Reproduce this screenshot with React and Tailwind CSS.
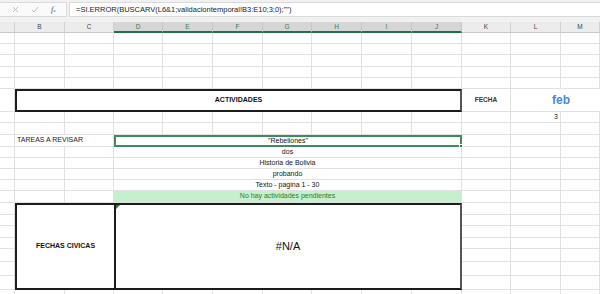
import React from 'react';

const COLS = [
  'w-[15px]', // A
  'w-[50px]', // B
  'w-[49px]', // C
  'w-[49px]', // D
  'w-[50px]', // E
  'w-[50px]', // F
  'w-[49px]', // G
  'w-[50px]', // H
  'w-[50px]', // I
  'w-[50px]', // J
  'w-[49px]', // K
  'w-[50px]', // L
  'flex-1', // M
];
const LETTERS = ['', 'B', 'C', 'D', 'E', 'F', 'G', 'H', 'I', 'J', 'K', 'L', 'M'];
const FONT = { fontFamily: '"Liberation Sans", Arial, sans-serif' };

const Blank = ({ i, className = '', children }) => (
  <div className={`${COLS[i]} shrink-0 h-full border-r border-b border-[#e1e1e1] ${className}`}>
    {children}
  </div>
);

const PlainRow = ({ h }) => (
  <div className={`flex ${h}`}>
    {COLS.map((_, i) => (
      <Blank key={i} i={i} />
    ))}
  </div>
);

// column of small sub-rows next to the tall merged boxes
const SubRows = ({ i }) => (
  <div className={`${COLS[i]} shrink-0 flex flex-col`}>
    {['h-[12px]', 'h-[11px]', 'h-[12px]', 'h-[11px]', 'h-[13px]', 'h-[14px]', 'h-[14px]'].map((h, k) => (
      <div key={k} className={`${h} border-r border-b border-[#e1e1e1]`} />
    ))}
  </div>
);

const MergedDJ = ({ children, className = '' }) => (
  <div
    className={`w-[348px] shrink-0 h-full border-r border-b border-[#e1e1e1] flex items-center justify-center text-[7px] ${className}`}
  >
    {children}
  </div>
);

const TextRow = ({ h, children, green }) => (
  <div className={`flex ${h}`}>
    <Blank i={0} />
    <Blank i={1} />
    <Blank i={2} />
    <MergedDJ className={green ? 'bg-[#c6efce] text-[#2a8020]' : 'text-[#111]'}>{children}</MergedDJ>
    <Blank i={10} />
    <Blank i={11} />
    <Blank i={12} />
  </div>
);

const FormulaBar = () => (
  <div className="h-[22px] bg-[#f1f1f1] pt-[2px] flex gap-[2px]">
    <div className="w-[67px] h-[15px] bg-[#fafafa] border-y border-r border-[#dadada] flex items-center pl-[12px] gap-[12px]">
      <svg width="7" height="7" viewBox="0 0 7 7" className="shrink-0">
        <path d="M1 1 L6 6 M6 1 L1 6" stroke="#b4b4b4" strokeWidth="0.9" />
      </svg>
      <svg width="8" height="7" viewBox="0 0 8 7" className="shrink-0">
        <path d="M1 4 L3 6 L7 1" stroke="#b4b4b4" strokeWidth="0.9" fill="none" />
      </svg>
      <span className="text-[8px] italic text-[#555] leading-none" style={{ fontFamily: '"Liberation Serif", serif' }}>
        f<span className="text-[5px]">x</span>
      </span>
    </div>
    <div className="flex-1 h-[15px] bg-white border-y border-l border-[#dadada] flex items-center pl-[6px] text-[7.5px] text-[#222]">
      =SI.ERROR(BUSCARV(L6&amp;1;validaciontemporal!B3:E10;3;0);"")
    </div>
  </div>
);

const HeaderRow = () => (
  <div className="flex h-[11px]">
    {COLS.map((c, i) => {
      const sel = i >= 3 && i <= 9;
      return (
        <div
          key={i}
          className={`${c} shrink-0 h-full flex items-center justify-center text-[6.5px] border-r ${
            sel
              ? 'bg-[#d6d6d6] text-[#3c7a52] border-[#c4c4c4] border-b-2 border-b-[#217346]'
              : 'bg-[#ececec] text-[#444] border-[#d0d0d0] border-b border-b-[#c8c8c8]'
          }`}
        >
          {LETTERS[i]}
        </div>
      );
    })}
  </div>
);

export default function App() {
  return (
    <div className="w-[600px] h-[294px] overflow-hidden bg-white" style={FONT}>
      <FormulaBar />
      <HeaderRow />

      <PlainRow h="h-[11px]" />
      <PlainRow h="h-[11px]" />
      <PlainRow h="h-[12px]" />
      <PlainRow h="h-[11px]" />
      <PlainRow h="h-[11px]" />

      {/* ACTIVIDADES / FECHA / feb */}
      <div className="flex h-[23px]">
        <Blank i={0} />
        <div className="w-[447px] shrink-0 h-full border-2 border-[#1c1c1c] border-r-[#555] flex items-center justify-center text-[7px] font-bold text-[#111]">
          ACTIVIDADES
        </div>
        <Blank i={10} className="flex items-center justify-center text-[6.5px] font-bold text-[#333]">
          FECHA
        </Blank>
        <div className="flex-1 h-full border-b border-[#e1e1e1] flex items-center">
          <div className="w-[100px] text-center text-[12px] font-bold text-[#4a88da] leading-none">feb</div>
        </div>
      </div>

      <div className="flex h-[11px]">
        {COLS.map((_, i) => (
          <Blank key={i} i={i} className={i === 11 ? 'flex items-center justify-end pr-[2px] text-[7px] text-[#222]' : ''}>
            {i === 11 ? '3' : null}
          </Blank>
        ))}
      </div>

      <PlainRow h="h-[12px]" />

      {/* TAREAS A REVISAR */}
      <div className="flex h-[12px]">
        <Blank i={0} />
        <div className="w-[99px] shrink-0 h-full border-r border-b border-[#e1e1e1] flex items-center pl-[2px] text-[7px] text-[#222] whitespace-nowrap">
          TAREAS A REVISAR
        </div>
        <div className="relative w-[348px] shrink-0 h-full border-2 border-[#3f8a5b] flex items-center justify-center text-[7px] text-[#111]">
          "Rebeliones"
          <div className="absolute -right-[3px] -bottom-[3px] w-[4px] h-[4px] bg-[#217346] border border-white" />
        </div>
        <Blank i={10} />
        <Blank i={11} />
        <Blank i={12} />
      </div>

      <TextRow h="h-[11px]">dos</TextRow>
      <TextRow h="h-[11px]">Historia de Bolivia</TextRow>
      <TextRow h="h-[11px]">probando</TextRow>
      <TextRow h="h-[11px]">Texto - pagina 1 - 30</TextRow>
      <TextRow h="h-[12px]" green>
        No hay actividades pendientes
      </TextRow>

      {/* FECHAS CIVICAS / #N/A */}
      <div className="flex h-[87px]">
        <SubRows i={0} />
        <div className="w-[99px] shrink-0 h-full border-2 border-r-0 border-[#1c1c1c] flex items-center justify-center text-[7px] font-bold text-[#111]">
          FECHAS CIVICAS
        </div>
        <div className="relative w-[348px] shrink-0 h-full border-2 border-[#1c1c1c] border-r-[#555] flex items-center justify-center text-[11px] text-[#111]">
          #N/A
          <svg width="4" height="4" viewBox="0 0 4 4" className="absolute left-0 top-0">
            <path d="M0 0 L4 0 L0 4 Z" fill="#1f8a2a" />
          </svg>
        </div>
        <SubRows i={10} />
        <SubRows i={11} />
        <SubRows i={12} />
      </div>

      <PlainRow h="h-[12px]" />
    </div>
  );
}
